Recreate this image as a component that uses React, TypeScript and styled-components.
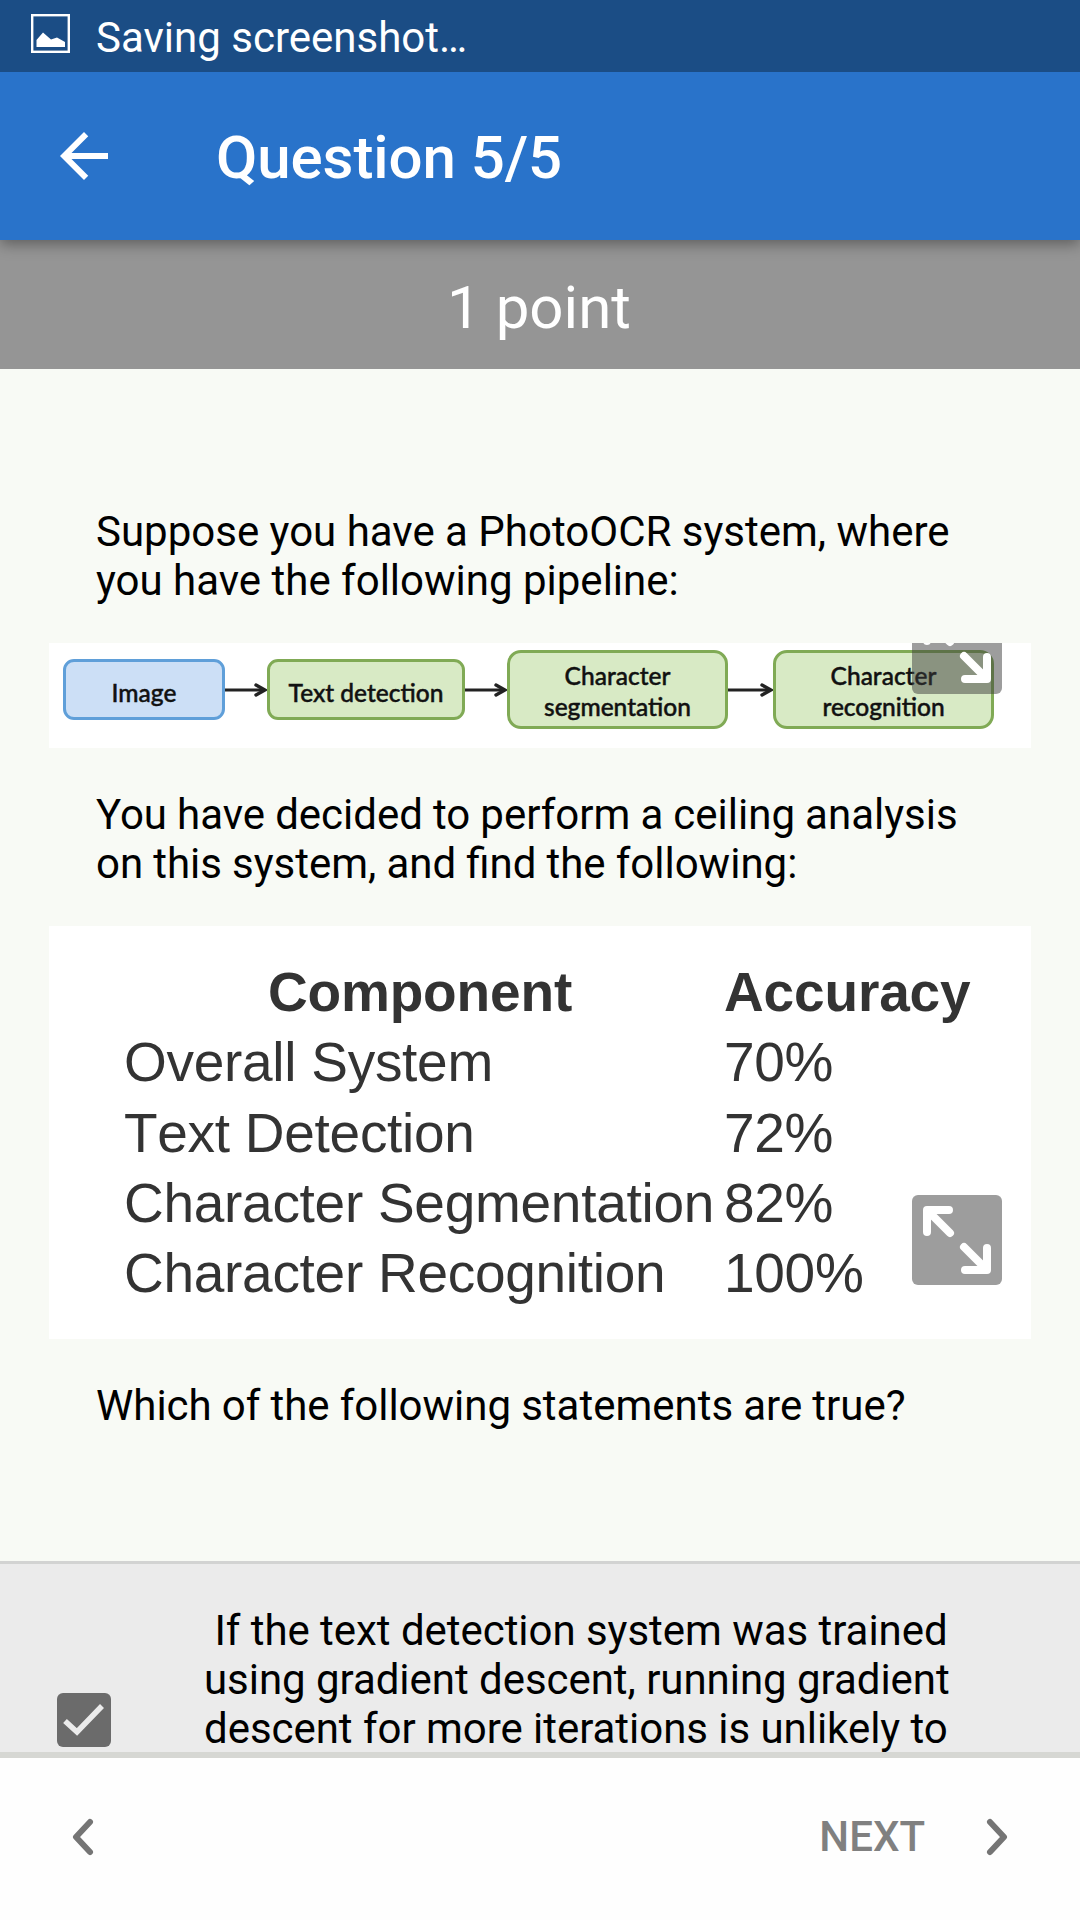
import React from "react";
import styled, { createGlobalStyle } from "styled-components";

const Global = createGlobalStyle`
  * { box-sizing: border-box; }
  body { margin: 0; background: #fff; font-family: Roboto, "Noto Sans", sans-serif; }
  p, h1 { margin: 0; }
`;

const Screen = styled.div`
  width: 1080px;
  height: 1920px;
  overflow: hidden;
  display: flex;
  flex-direction: column;
  background: #f8faf5;
  color: #000;
`;

const StatusBar = styled.div`
  height: 72px;
  flex: none;
  display: flex;
  align-items: center;
  gap: 25px;
  padding: 2px 31px 0;
  background: #1b4d85;
  color: #fff;
  font-size: 42px;
  line-height: 49px;
  z-index: 2;
`;

const PictureIcon = styled.svg`
  width: 40px;
  height: 40px;
  margin-top: -7px;
`;

const AppBar = styled.header`
  height: 168px;
  flex: none;
  display: flex;
  align-items: center;
  gap: 96px;
  padding: 0 48px;
  background: #2973ca;
  color: #fff;
  box-shadow: 0 4px 14px rgba(0, 0, 0, 0.38);
  z-index: 1;
`;

const BackIcon = styled.svg`
  width: 72px;
  height: 72px;
`;

const Title = styled.h1`
  font-size: 60px;
  font-weight: 500;
  line-height: 70px;
  padding-top: 4px;
  letter-spacing: -0.08px;
`;

const PointsBar = styled.div`
  height: 129px;
  flex: none;
  display: flex;
  justify-content: center;
  align-items: center;
  padding: 6px 2px 0 0;
  background: #959595;
  color: #fff;
  font-size: 60px;
  line-height: 70px;
`;

const Question = styled.main`
  height: 1192px;
  flex: none;
  padding: 138px 49px 0 49px;
`;

const Prose = styled.p<{ $gap?: number; $track?: number }>`
  margin-left: 47px;
  margin-bottom: ${(p) => p.$gap ?? 0}px;
  font-size: 42px;
  line-height: 49px;
  letter-spacing: ${(p) => p.$track ?? 0}px;
  font-variant-ligatures: common-ligatures;
  white-space: nowrap;
`;

const Figure = styled.div<{ $height: number; $gap: number }>`
  position: relative;
  overflow: hidden;
  height: ${(p) => p.$height}px;
  margin-bottom: ${(p) => p.$gap}px;
  background: #fff;
`;

const Pipeline = styled.div`
  display: flex;
  align-items: center;
  height: 92px;
  padding: 1px 0 0 14px;
`;

const Stage = styled.div<{ $width: number; $tall?: boolean; $input?: boolean }>`
  width: ${(p) => p.$width}px;
  height: ${(p) => (p.$tall ? 79 : 61)}px;
  flex: none;
  display: flex;
  align-items: center;
  justify-content: center;
  padding-top: ${(p) => (p.$tall ? 3 : 5)}px;
  border: 3px solid ${(p) => (p.$input ? "#5f9fd9" : "#80aa55")};
  border-radius: ${(p) => (p.$tall ? 14 : 11)}px;
  background: ${(p) => (p.$input ? "#ccdff6" : "#d8eac5")};
  color: #111;
  font-family: Lato, sans-serif;
  font-weight: 500;
  font-size: 24.5px;
  line-height: 31px;
  text-align: center;
  -webkit-text-stroke: 0.45px #111;
`;

const ArrowIcon = styled.svg<{ $width: number }>`
  width: ${(p) => p.$width}px;
  height: 16px;
  flex: none;
`;

const ExpandButton = styled.button<{ $top: number }>`
  position: absolute;
  top: ${(p) => p.$top}px;
  right: 29px;
  width: 90px;
  height: 90px;
  padding: 0;
  border: 0;
  border-radius: 6px;
  background: rgba(60, 60, 60, 0.5);
  svg { display: block; }
`;

const Results = styled.div`
  display: grid;
  grid-template-columns: 600px 300px;
  grid-auto-rows: 70.25px;
  padding: 31px 0 0 75px;
  font-family: "Liberation Sans", Arial, sans-serif;
  font-size: 55px;
  line-height: 70px;
  font-kerning: none;
  color: #333;
  white-space: nowrap;
`;

const Cell = styled.div<{ $head?: boolean; $center?: boolean }>`
  font-weight: ${(p) => (p.$head ? 700 : 400)};
  text-align: ${(p) => (p.$center ? "center" : "left")};
  letter-spacing: ${(p) => (p.$head ? -0.15 : -0.28)}px;
  padding-right: ${(p) => (p.$center ? 8 : 0)}px;
`;

const Option = styled.div`
  height: 191px;
  flex: none;
  overflow: hidden;
  display: flex;
  border-top: 3px solid #d2d3d2;
  background: #ebebeb;
`;

const Checkbox = styled.svg`
  width: 54px;
  height: 54px;
  margin: 129px 93px 0 57px;
  flex: none;
`;

const OptionText = styled.div`
  padding-top: 42px;
  font-size: 42px;
  line-height: 49px;
  letter-spacing: -0.04px;
  white-space: pre;
`;

const BottomBar = styled.footer`
  height: 168px;
  flex: none;
  display: flex;
  align-items: center;
  justify-content: space-between;
  border-top: 6px solid #d6d7d3;
  padding: 0 65px 5px 65px;
  background: #fefefe;
`;

const NextButton = styled.div`
  display: flex;
  align-items: center;
  gap: 54px;
  color: #808080;
  font-size: 42px;
  font-weight: 500;
  line-height: 49px;
`;

const Chevron = styled.svg`
  width: 36px;
  height: 42px;
`;

const Arrow = ({ width }: { width: number }) => (
  <ArrowIcon $width={width} viewBox={`0 0 ${width} 16`} fill="none" stroke="#222">
    <path d={`M0 8H${width - 4}`} strokeWidth="3" />
    <path d={`M${width - 11} 3L${width - 2} 8L${width - 11} 13`} strokeWidth="3.4" strokeLinecap="round" />
  </ArrowIcon>
);

const Expand = ({ top }: { top: number }) => (
  <ExpandButton $top={top} aria-label="Expand">
    <svg width="90" height="90" fill="none" stroke="#fff" strokeWidth="8" strokeLinecap="round" strokeLinejoin="round">
      <path d="M15 37V15H37M16 16L38 38" />
      <path d="M52 52L74 74M75 53V75H53" />
    </svg>
  </ExpandButton>
);

const rows = [
  { name: "Overall System", value: "70%" },
  { name: "Text Detection", value: "72%" },
  { name: "Character Segmentation", value: "82%" },
  { name: "Character Recognition", value: "100%" },
];

export default function App() {
  return (
    <Screen>
      <Global />
      <StatusBar>
        <PictureIcon viewBox="0 0 40 40">
          <rect x="1.2" y="1.2" width="36.6" height="36.6" fill="none" stroke="#fff" strokeWidth="2.4" />
          <path d="M5.500 33V26L12 18.500L20 25.500L26 23.500L34 28V33Z" fill="#fff" />
        </PictureIcon>
        Saving screenshot…
      </StatusBar>
      <AppBar>
        <BackIcon viewBox="0 0 24 24" fill="#fff">
          <path d="M20 11H7.830l5.590-5.590L12 4l-8 8 8 8 1.410-1.410L7.830 13H20v-2z" />
        </BackIcon>
        <Title>Question 5/5</Title>
      </AppBar>
      <PointsBar>1 point</PointsBar>
      <Question>
        <Prose $gap={38}>
          Suppose you have a PhotoOCR system, where
          <br />
          you have the following pipeline:
        </Prose>
        <Figure $height={105} $gap={42}>
          <Pipeline>
            <Stage $width={162} $input>Image</Stage>
            <Arrow width={42} />
            <Stage $width={198}>Text detection</Stage>
            <Arrow width={42} />
            <Stage $width={221} $tall>
              Character
              <br />
              segmentation
            </Stage>
            <Arrow width={45} />
            <Stage $width={221} $tall>
              Character
              <br />
              recognition
            </Stage>
          </Pipeline>
          <Expand top={-39} />
        </Figure>
        <Prose $gap={38}>
          <Tight>
            You have decided to perform a ceiling analysis
            <br />
            on this system, and find the following:
          </Tight>
        </Prose>
        <Figure $height={413} $gap={42}>
          <Results>
            <Cell $head $center>Component</Cell>
            <Cell $head>Accuracy</Cell>
            {rows.map((r) => (
              <React.Fragment key={r.name}>
                <Cell>{r.name}</Cell>
                <Cell>{r.value}</Cell>
              </React.Fragment>
            ))}
          </Results>
          <Expand top={269} />
        </Figure>
        <Prose>
          <Tight>Which of the following statements are true?</Tight>
        </Prose>
      </Question>
      <Option>
        <Checkbox viewBox="0 0 54 54">
          <rect width="54" height="54" rx="6" fill="#6b6b6b" />
          <path d="M8 28L20 39L45 13" fill="none" stroke="#ebebeb" strokeWidth="5.500" />
        </Checkbox>
        <OptionText>
          {" If the text detection system was trained\nusing gradient descent, running gradient\ndescent for more iterations is unlikely to"}
        </OptionText>
      </Option>
      <BottomBar>
        <Chevron viewBox="0 0 36 42" fill="none" stroke="#757575" strokeWidth="6" strokeLinecap="round" strokeLinejoin="round">
          <path d="M25 6L11 21L25 36" />
        </Chevron>
        <NextButton>
          NEXT
          <Chevron viewBox="0 0 36 42" fill="none" stroke="#757575" strokeWidth="6" strokeLinecap="round" strokeLinejoin="round">
            <path d="M11 6L25 21L11 36" />
          </Chevron>
        </NextButton>
      </BottomBar>
    </Screen>
  );
}

// Narrower word spaces keep the "fi" ligature that letter-spacing would break.
const Tight = styled.span`
  word-spacing: -0.35px;
`;
